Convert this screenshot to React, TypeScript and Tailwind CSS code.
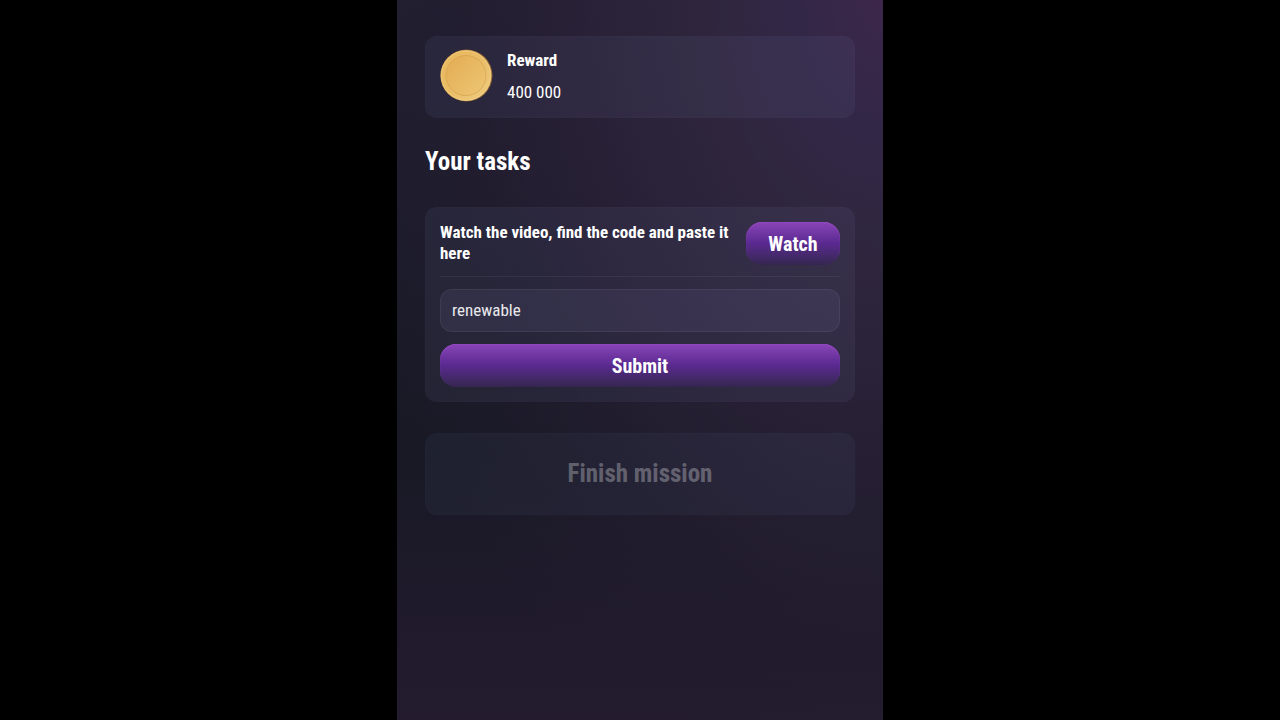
import React from 'react';

const FONT = "font-['Roboto_Condensed','Liberation_Sans_Narrow','Roboto',sans-serif]";

const PURPLE_BUTTON =
  'h-[43px] rounded-2xl bg-linear-to-b from-[#8a45b8] via-[#5a2990] via-50% to-[#352650] text-xl font-bold text-white shadow-[inset_0_1px_1px_#9248c0]';

function Coin() {
  return (
    <svg viewBox="0 0 54 54" className="size-[54px] shrink-0" aria-hidden="true">
      <defs>
        <linearGradient id="coin-rim" x1="0" y1="0" x2="1" y2="1">
          <stop offset="0" stopColor="#e8b75c" />
          <stop offset="0.5" stopColor="#e9bd67" />
          <stop offset="1" stopColor="#f0cd82" />
        </linearGradient>
        <linearGradient id="coin-face" x1="0" y1="0" x2="1" y2="1">
          <stop offset="0" stopColor="#e3ac52" />
          <stop offset="1" stopColor="#edc775" />
        </linearGradient>
      </defs>
      <circle cx="27.5" cy="26.5" r="26" fill="#8a6138" />
      <circle cx="27" cy="26.5" r="25.5" fill="url(#coin-rim)" />
      <circle cx="27" cy="26.5" r="24.5" fill="none" stroke="#f3d48c" strokeOpacity="0.5" />
      <circle cx="27" cy="26.5" r="20" fill="url(#coin-face)" stroke="#d7a350" strokeWidth="0.8" />
    </svg>
  );
}

export default function App() {
  const [code, setCode] = React.useState('renewable');

  return (
    <div className={`min-h-screen bg-black text-white ${FONT}`}>
      <main className="mx-auto min-h-screen w-full max-w-[486px] bg-[radial-gradient(ellipse_at_top_right,#3c274a_0%,#332747_12%,#2f263e_25%,#2b2239cc_42%,#231d3099_60%,transparent_80%),linear-gradient(to_bottom,#211f31_0%,#181925_62%,#241b2f_100%)] px-7 pt-9">
        <section className="flex items-center gap-3.5 rounded-xl border border-white/1 bg-[#7480b4]/10 px-[13px] pt-[11px] pb-[13px]">
          <Coin />
          <div className="flex flex-col gap-2">
            <h2 className="text-[17px] leading-6 font-bold">Reward</h2>
            <p className="text-[17px] leading-6">400 000</p>
          </div>
        </section>

        <h1 className="mt-7 text-[25px] leading-8 font-bold">Your tasks</h1>

        <form
          className="mt-[29px] rounded-xl border border-white/1 bg-[#7480b4]/10 p-3.5"
          onSubmit={(e) => e.preventDefault()}
        >
          <div className="flex items-start justify-between gap-2 border-b border-white/6 pb-[11px]">
            <label htmlFor="code" className="min-w-0 flex-1 text-[17px] leading-[21px] font-bold">
              Watch the video, find the code and paste it here
            </label>
            <button type="button" className={`w-[94px] shrink-0 ${PURPLE_BUTTON}`}>
              Watch
            </button>
          </div>

          <input
            id="code"
            type="text"
            value={code}
            onChange={(e) => setCode(e.currentTarget.value)}
            className="mt-3 block h-[43px] w-full rounded-xl border border-white/6 bg-[#8f88c8]/10 px-[11px] pb-0.5 text-[17px] text-white/90 outline-none"
          />

          <button type="submit" className={`mt-3 block w-full ${PURPLE_BUTTON}`}>
            Submit
          </button>
        </form>

        <button
          type="button"
          disabled
          className="mt-[31px] block h-[82px] w-full rounded-xl border border-white/1 bg-[#647ba8]/8 text-[25px] font-bold text-white/30"
        >
          Finish mission
        </button>
      </main>
    </div>
  );
}
